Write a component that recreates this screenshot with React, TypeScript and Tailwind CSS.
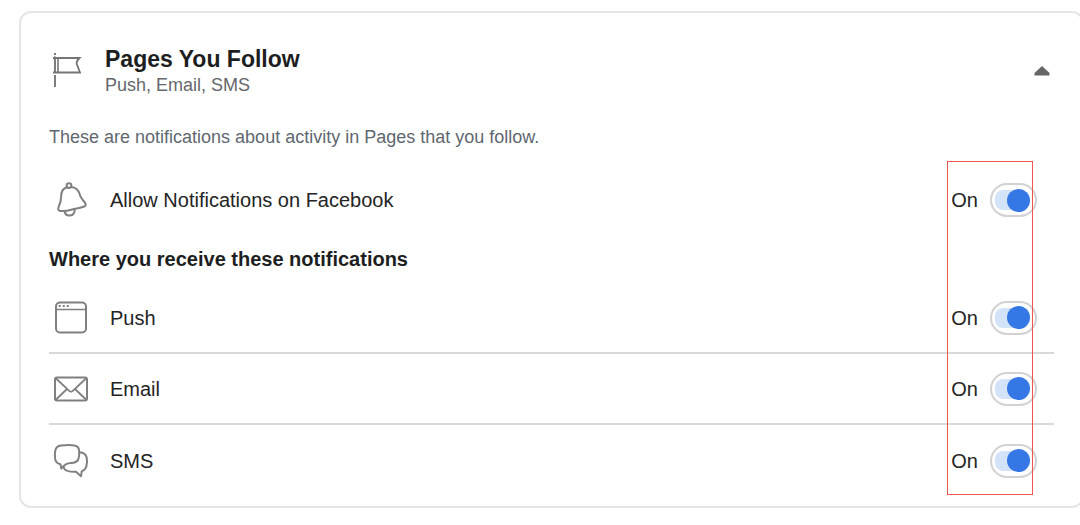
import React, { useState } from 'react';

const iconProps = {
  viewBox: '0 0 36 36',
  fill: 'none',
  stroke: '#808080',
  strokeWidth: 2,
  strokeLinejoin: 'round' as const,
  strokeLinecap: 'round' as const,
  className: 'size-9 shrink-0',
  'aria-hidden': true,
};

const FlagIcon = () => (
  <svg {...iconProps} strokeLinecap="butt">
    <path d="M2 0v2M2 3.500v15.500M2 22v12" stroke="#6f6f6f" strokeWidth="1.800" />
    <path d="M0 5h26.500q-4.500 4.500-2 8l2.500 6.500H0" stroke="#757575" strokeWidth="1.800" strokeLinejoin="miter" />
    <path d="M5 5v15" stroke="#757575" strokeWidth="1.600" />
  </svg>
);

const BellIcon = () => (
  <svg {...iconProps}>
    <circle cx="16" cy="3.600" r="2.400" />
    <path d="M13.500 5.500C9.500 6.800 8.200 10 8.200 14c0 5-.8 7-2.600 11-.8 2-.5 3.600 1.600 4 4 .3 8-.3 12-1.500 4-1.100 8-1.300 12-3 1.900-.8 1.900-2.400.6-4-2.800-3.300-4.300-5-5-8C25.600 8.500 23.500 5.300 18 5" />
    <path d="M11.500 29c.5 3.300 2.500 4.800 5.500 4.500 3-.3 4.800-2.600 4.600-6" />
  </svg>
);

const WindowIcon = () => (
  <svg {...iconProps}>
    <rect x="3" y="2.500" width="30" height="30" rx="4" />
    <path d="M3 9.500h30" strokeWidth="1.600" />
    <path d="M6.500 6h.5M10.500 6h.5M14.500 6h.5" />
  </svg>
);

const MailIcon = () => (
  <svg {...iconProps}>
    <rect x="2" y="6.500" width="32" height="23" rx="2" />
    <path d="M3 7.500l13.500 12.600q1.500 1.200 3 0L33 7.500M3 28.500l11-10.500M33 28.500L22 18" strokeWidth="1.800" />
  </svg>
);

const ChatIcon = () => (
  <svg {...iconProps}>
    <path d="M8 2.500C15 1.700 18 1.700 21.500 2.500c3 .6 4.500 2.500 4.700 5.500.2 3.500.1 6-1 8.500-1.200 2.600-3.500 3.400-7.200 3.500-4.500.1-6.300 1.500-9.700 5.500l-.8-4.200C3.700 20.500 2.300 18.500 2 15c-.3-3.500-.2-5 .3-7.500.6-3 2.500-4.600 5.700-5z" />
    <path d="M26.500 9.300c4 .3 6.300 1.700 7.200 5.200.6 3 .4 5.500-.3 8.500-.8 3.200-2.500 4.600-4.600 5.200l-.8 5-5-4.500c-5 .3-9.300.1-11.500-2.700-.6-.9-1-1.700-1.100-2.800" />
  </svg>
);

type RowProps = {
  id: string;
  label: string;
  icon: React.ReactNode;
  className: string;
};

const ToggleRow: React.FC<RowProps> = ({ id, label, icon, className }) => {
  const [on, setOn] = useState(true);

  return (
    <div className={`flex items-center pl-1 pr-[17px] ${className}`}>
      {icon}
      <label htmlFor={id} className="ml-[21px] flex-1">{label}</label>
      <span className="mr-3">{on ? 'On' : 'Off'}</span>
      <input
        id={id}
        type="checkbox"
        role="switch"
        checked={on}
        onChange={() => setOn(!on)}
        className="flex h-[34px] w-[47px] shrink-0 cursor-pointer appearance-none items-center rounded-full border-2 border-[#d3d1d1] bg-white pl-[3px] before:h-5 before:w-6 before:rounded-l-lg before:bg-[#d3e4f9] after:-ml-3 after:size-[23px] after:rounded-full after:bg-[#3578e5] not-checked:before:bg-gray-200 not-checked:after:-ml-6 not-checked:after:bg-gray-400"
      />
    </div>
  );
};

const CHANNELS = [
  { id: 'push', label: 'Push', icon: <WindowIcon /> },
  { id: 'email', label: 'Email', icon: <MailIcon /> },
  { id: 'sms', label: 'SMS', icon: <ChatIcon /> },
];

const App: React.FC = () => {
  const [open, setOpen] = useState(true);

  return (
    <main className="min-h-screen overflow-hidden bg-white pl-[19px] pt-[11px] font-['Liberation_Sans',Arial,sans-serif] text-[20px] leading-6 text-[#242424]">
      <div className="-mr-1 rounded-xl border-2 border-[#e5e5e5] px-7 pb-[10px] pt-8">
        {/* Header */}
        <header className="flex items-center">
          <div className="w-14 pl-1">
            <FlagIcon />
          </div>
          <div className="flex-1">
            <h2 className="text-[23px] font-bold leading-7 text-[#1c1e21]">Pages You Follow</h2>
            <p className="text-[18px] text-[#65676b]">Push, Email, SMS</p>
          </div>
          <button
            type="button"
            aria-label="Toggle section"
            aria-expanded={open}
            onClick={() => setOpen(!open)}
            className="cursor-pointer p-1"
          >
            <svg viewBox="0 0 16 10" fill="#666" className="h-[10px] w-4">
              <path d="M8 0l7.500 7v2.500H.5V7z" />
            </svg>
          </button>
        </header>

        {open && (
          <>
            <p className="mt-7 text-[18px] text-[#606770]">These are notifications about activity in Pages that you follow.</p>

            <section className="relative mt-3">
              <ToggleRow id="allow" label="Allow Notifications on Facebook" icon={<BellIcon />} className="h-[78px]" />

              <h3 className="mb-1 font-bold leading-10 text-[#1c1e21]">Where you receive these notifications</h3>
              <div>
                {CHANNELS.map((channel) => (
                  <ToggleRow key={channel.id} {...channel} className="h-[71px] border-[#d9d9d9] not-last:border-b-2" />
                ))}
              </div>

              {/* Highlight around the switches */}
              <div className="pointer-events-none absolute bottom-px right-[21px] top-0 w-[86px] border border-solid border-[#f0544f]" />
            </section>
          </>
        )}
      </div>
    </main>
  );
};

export default App;
